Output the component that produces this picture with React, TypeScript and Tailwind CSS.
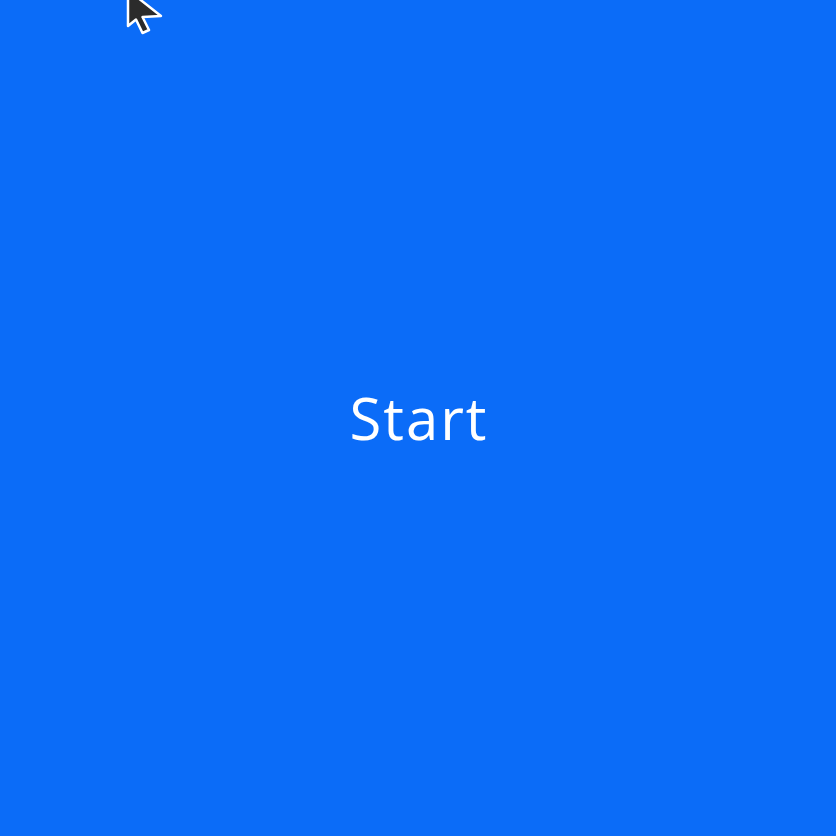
const App = () => {
  return (
    <div className="relative flex h-[836px] w-[836px] items-center justify-center overflow-hidden bg-[#0b6cf8]">
      {/* Start label */}
      <span className="pl-[2px] text-[58px] leading-none tracking-[2px] text-white [font-family:'Open_Sans',sans-serif]">
        Start
      </span>
      {/* mouse pointer over the page */}
      <svg
        className="absolute left-[120px] top-[-12px]"
        width="48"
        height="50"
        viewBox="0 -12 48 50"
      >
        <path
          d="M8 -10 L8 26 L16 19.5 L22.5 33 L29 30 L22.5 17 L41 16 Z"
          fill="#2b2b2b"
          stroke="#ffffff"
          strokeWidth="2.5"
          strokeLinejoin="round"
        />
      </svg>
    </div>
  );
};

export default App;
